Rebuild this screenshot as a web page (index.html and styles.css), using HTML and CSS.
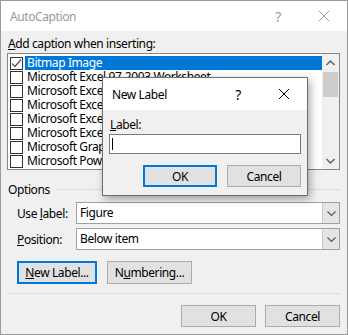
FILE: index.html
```html
<!DOCTYPE html>
<html lang="en">
<head>
    <meta charset="UTF-8">
    <title>AutoCaption</title>
    <link rel="stylesheet" href="styles.css">
</head>
<body>

    <div class="window">
        <div class="titlebar">
            <span class="title">AutoCaption</span>
            <span class="tb-btn">?</span>
            <span class="tb-btn close">
                <svg width="10" height="10" viewBox="0 0 10 10"><path d="M0 0L10 10M10 0L0 10" stroke="currentColor" stroke-width="1"/></svg>
            </span>
        </div>

        <div class="content">
            <div class="caption-label"><u>A</u>dd caption when inserting:</div>

            <div class="listbox">
                <div class="rows">
                    <div class="row selected">
                        <span class="check checked">
                            <svg width="11" height="11" viewBox="0 0 11 11"><path d="M1 5.5L4 8.5L10 1.5" fill="none" stroke="#555" stroke-width="1.2"/></svg>
                        </span>
                        <span class="item">Bitmap Image</span>
                    </div>
                    <div class="row"><span class="check"></span><span class="item">Microsoft Excel 97-2003 Worksheet</span></div>
                    <div class="row"><span class="check"></span><span class="item">Microsoft Excel Binary Worksheet</span></div>
                    <div class="row"><span class="check"></span><span class="item">Microsoft Excel Chart</span></div>
                    <div class="row"><span class="check"></span><span class="item">Microsoft Excel Macro-Enabled Worksheet</span></div>
                    <div class="row"><span class="check"></span><span class="item">Microsoft Excel Worksheet</span></div>
                    <div class="row"><span class="check"></span><span class="item">Microsoft Graph Chart</span></div>
                    <div class="row"><span class="check"></span><span class="item">Microsoft PowerPoint Presentation</span></div>
                </div>
                <div class="scrollbar">
                    <span class="sb-arrow">
                        <svg width="9" height="6" viewBox="0 0 9 6"><path d="M0.5 5L4.5 1L8.5 5" fill="none" stroke="#606060" stroke-width="1.4"/></svg>
                    </span>
                    <span class="sb-thumb"></span>
                    <span class="sb-track"></span>
                    <span class="sb-arrow">
                        <svg width="9" height="6" viewBox="0 0 9 6"><path d="M0.5 1L4.5 5L8.5 1" fill="none" stroke="#606060" stroke-width="1.4"/></svg>
                    </span>
                </div>
            </div>

            <div class="group-title">
                <span>Options</span>
                <span class="group-line"></span>
            </div>

            <div class="field">
                <span class="field-label">Use <u>l</u>abel:</span>
                <div class="combo">
                    <span class="combo-text">Figure</span>
                    <span class="combo-btn">
                        <svg width="9" height="5" viewBox="0 0 9 5"><path d="M0.5 0.5L4.5 4.5L8.5 0.5" fill="none" stroke="#555" stroke-width="1.1"/></svg>
                    </span>
                </div>
            </div>
            <div class="field">
                <span class="field-label"><u>P</u>osition:</span>
                <div class="combo">
                    <span class="combo-text">Below item</span>
                    <span class="combo-btn">
                        <svg width="9" height="5" viewBox="0 0 9 5"><path d="M0.5 0.5L4.5 4.5L8.5 0.5" fill="none" stroke="#555" stroke-width="1.1"/></svg>
                    </span>
                </div>
            </div>

            <div class="option-buttons">
                <button class="btn default btn-newlabel"><u>N</u>ew Label...</button>
                <button class="btn btn-numbering">N<u>u</u>mbering...</button>
            </div>

            <div class="separator"></div>

            <div class="footer">
                <button class="btn">OK</button>
                <button class="btn">Cancel</button>
            </div>
        </div>
    </div>

    <div class="dialog">
        <div class="titlebar dialog-titlebar">
            <span class="title">New Label</span>
            <span class="tb-btn">?</span>
            <span class="tb-btn close">
                <svg width="10" height="10" viewBox="0 0 10 10"><path d="M0 0L10 10M10 0L0 10" stroke="currentColor" stroke-width="1"/></svg>
            </span>
        </div>
        <div class="dialog-body">
            <div class="dialog-label"><u>L</u>abel:</div>
            <div class="textbox"><span class="caret"></span></div>
            <div class="dialog-buttons">
                <button class="btn default">OK</button>
                <button class="btn">Cancel</button>
            </div>
        </div>
    </div>

</body>
</html>
```

FILE: styles.css
```css
body {
    margin: 0;
    font-family: "Noto Sans", "Open Sans", sans-serif;
    font-size: 12px;
    letter-spacing: -0.4px;
    color: #000;
    background: #f0f0f0;
}

u {
    text-decoration: underline;
    text-underline-offset: 1px;
}

.window {
    width: 348px;
    height: 335px;
    box-sizing: border-box;
    border: 1px solid #9a9a9a;
    background: #f0f0f0;
}

.titlebar {
    display: flex;
    align-items: center;
    height: 30px;
    background: #fff;
    color: #999;
}

.title {
    flex: 1;
    padding-left: 9px;
    font-size: 12px;
}

.tb-btn {
    display: flex;
    align-items: center;
    justify-content: center;
    width: 46px;
    height: 100%;
    font-size: 14px;
}

.content {
    padding: 5px 7px 0 6px;
}

.caption-label {
    line-height: 16px;
    height: 16px;
    padding-left: 1px;
    margin-bottom: 1px;
}

.listbox {
    display: flex;
    height: 117px;
    box-sizing: border-box;
    border: 1px solid #828790;
    background: #fff;
}

.rows {
    flex: 1;
    padding: 2px 0 0 2px;
    overflow: hidden;
}

.row {
    display: flex;
    align-items: center;
    height: 14px;
}

.check {
    display: flex;
    align-items: center;
    justify-content: center;
    width: 11px;
    height: 11px;
    border: 1px solid #333;
    background: #fff;
    margin-right: 2px;
    flex-shrink: 0;
}

.item {
    flex: 1;
    height: 14px;
    line-height: 14px;
    padding-left: 2px;
    white-space: nowrap;
    overflow: hidden;
}

.row.selected .item {
    background: #0078d7;
    color: #fff;
}

.scrollbar {
    display: flex;
    flex-direction: column;
    width: 17px;
    background: #f0f0f0;
}

.sb-arrow {
    display: flex;
    align-items: center;
    justify-content: center;
    height: 17px;
}

.sb-thumb {
    height: 25px;
    margin: 1px 1px 0;
    background: #cdcdcd;
}

.sb-track {
    flex: 1;
}

.group-title {
    display: flex;
    align-items: center;
    height: 16px;
    margin-top: 11px;
    padding-left: 1px;
}

.group-line {
    flex: 1;
    height: 1px;
    margin-left: 7px;
    background: #dcdcdc;
}

.field {
    display: flex;
    align-items: center;
    margin-top: 4px;
    padding-left: 10px;
}

.group-title + .field {
    margin-top: 5px;
}

.field-label {
    width: 59px;
}

.combo {
    flex: 1;
    display: flex;
    height: 22px;
    box-sizing: border-box;
    border: 1px solid #a0a0a0;
    background: #fff;
}

.combo-text {
    flex: 1;
    line-height: 20px;
    padding-left: 3px;
}

.combo-btn {
    display: flex;
    align-items: center;
    justify-content: center;
    width: 16px;
    border-left: 1px solid #c8c8c8;
    background: #e5e5e5;
}

.btn {
    height: 22px;
    box-sizing: border-box;
    border: 1px solid #adadad;
    background: #e1e1e1;
    font-family: inherit;
    font-size: 12px;
    letter-spacing: inherit;
    color: #000;
    padding: 0;
}

.btn.default {
    border: 2px solid #0078d7;
}

.option-buttons {
    display: flex;
    gap: 10px;
    margin-top: 11px;
    padding-left: 10px;
}

.option-buttons .btn {
    height: 23px;
}

.btn-newlabel {
    width: 80px;
}

.btn-numbering {
    width: 85px;
}

.separator {
    height: 1px;
    margin-top: 9px;
    background: #dcdcdc;
}

.footer {
    display: flex;
    justify-content: flex-end;
    gap: 9px;
    margin-top: 11px;
}

.footer .btn {
    width: 75px;
}

.dialog {
    position: absolute;
    left: 102px;
    top: 77px;
    width: 206px;
    height: 119px;
    box-sizing: border-box;
    border: 1px solid #6e6e6e;
    background: #f0f0f0;
    box-shadow: 2px 3px 8px rgba(0, 0, 0, 0.35);
}

.dialog-titlebar {
    height: 32px;
    color: #000;
}

.dialog-titlebar .title {
    padding-left: 9px;
}

.dialog-body {
    padding: 7px 6px 0 6px;
}

.dialog-label {
    line-height: 16px;
    padding-left: 1px;
}

.textbox {
    display: flex;
    align-items: center;
    height: 20px;
    margin-top: 1px;
    box-sizing: border-box;
    border: 1px solid #7a7a7a;
    background: #fff;
    padding-left: 2px;
}

.caret {
    width: 1px;
    height: 12px;
    background: #000;
}

.dialog-buttons {
    display: flex;
    justify-content: flex-end;
    gap: 10px;
    margin-top: 11px;
}

.dialog-buttons .btn {
    width: 74px;
}
```
